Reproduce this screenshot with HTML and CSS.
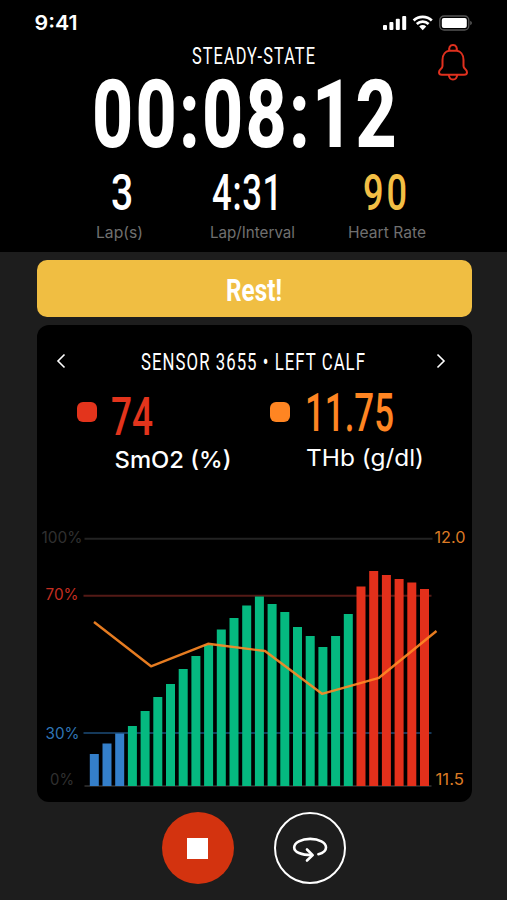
FILE: index.html
```
<!DOCTYPE html>
<html lang="en">

<head>
    <meta charset="utf-8">
    <title>Steady-State</title>
    <link rel="stylesheet" href="styles.css">
</head>
<body onload="renderBars()">
    <div class="header">
        <div class="status-bar">
            <svg class="clock" width="60" height="24">
                <text x="-.5" y="18.500" textLength="43" lengthAdjust="spacingAndGlyphs">9:41</text>
            </svg>
            <svg class="status-icons" width="90" height="20" fill="#fff">
                <rect x="0" y="11" width="4" height="5" rx="1"/>
                <rect x="6.400" y="8" width="4" height="8" rx="1"/>
                <rect x="12.800" y="4.800" width="4" height="11.200" rx="1"/>
                <rect x="19.200" y="2" width="4" height="14" rx="1"/>
                <g fill="none" stroke="#fff" stroke-width="2.700">
                    <path d="M30.600 6.500a13.200 13.200 0 0 1 18.200 0"/>
                    <path d="M33.800 10a8.600 8.600 0 0 1 11.800 0"/>
                </g>
                <path d="M36.200 12.500a5 5 0 0 1 7 0L39.700 16.200z"/>
                <rect x="56.800" y="2" width="29" height="14" rx="4.300" fill="none" stroke="#555" stroke-width="1.300"/>
                <rect x="58.800" y="4" width="25" height="10" rx="2"/>
                <path d="M87.300 6.800c2 .8 2 3.600 0 4.400z" fill="#666"/>
            </svg>
        </div>
        <div class="title-row">
            <svg class="narrow" width="130" height="30">
                <text class="mode" x="0" y="21.700" textLength="124" lengthAdjust="spacingAndGlyphs">STEADY-STATE</text>
            </svg>
            <svg class="bell" width="34" height="40" viewBox="0 0 34 40">
                <path d="M6.500 18C6.500 12 10 9.300 13 8.800H21c3 .5 6.500 3.200 6.500 9.200V24c0 3 3.500 3 3.500 6.200 0 1.800-1.500 2.600-3 2.600H6c-1.800 0-3-.8-3-2.600 0-3.200 3.500-3.200 3.500-6.200z"/>
                <path d="M13.500 8.800c-1-3 .5-5.900 3.500-5.900s4.500 2.900 3.500 5.900"/>
                <path d="M12.800 33c.3 2.800 1.800 4.500 4.200 4.500s3.900-1.700 4.200-4.500"/>
            </svg>
        </div>
        <svg class="narrow timer" width="310" height="80">
            <text x="0" y="73" textLength="307" lengthAdjust="spacingAndGlyphs">00:08:12</text>
        </svg>
        <div class="stats">
            <svg class="narrow" width="100" height="80">
                <text class="value" x="14" y="43" textLength="23" lengthAdjust="spacingAndGlyphs">3</text>
                <text class="label" x="-1" y="71" textLength="47" lengthAdjust="spacingAndGlyphs">Lap(s)</text>
            </svg>
            <svg class="narrow" width="100" height="80">
                <text class="value" x="1" y="43" textLength="71" lengthAdjust="spacingAndGlyphs">4:31</text>
                <text class="label" x="-1" y="71" textLength="85" lengthAdjust="spacingAndGlyphs">Lap/Interval</text>
            </svg>
            <svg class="narrow" width="100" height="80">
                <text class="value heart" x="14" y="43" textLength="47" lengthAdjust="spacingAndGlyphs">90</text>
                <text class="label" x="-1" y="71" textLength="78" lengthAdjust="spacingAndGlyphs">Heart Rate</text>
            </svg>
        </div>
    </div>

    <div class="rest">
        <svg class="narrow" width="56" height="40">
            <text class="rest-text" x="0" y="32" textLength="56" lengthAdjust="spacingAndGlyphs">Rest!</text>
        </svg>
    </div>

    <div class="card">
        <div class="sensor-row">
            <svg class="arrow" width="10" height="16"><path d="M8.500 1.500L2 8l6.500 6.500"/></svg>
            <svg class="narrow" width="224" height="30">
                <text class="sensor" x="2" y="24" textLength="225" lengthAdjust="spacingAndGlyphs">SENSOR 3655 • LEFT CALF</text>
            </svg>
            <svg class="arrow" width="10" height="16"><path d="M1.500 1.500L8 8l-6.500 6.500"/></svg>
        </div>
        <div class="readings">
            <div class="reading">
                <span class="dot red"></span>
                <svg class="narrow" width="130" height="90">
                    <text class="reading-value smo" x="14" y="47.500" textLength="42" lengthAdjust="spacingAndGlyphs">74</text>
                    <text class="unit" x="17.500" y="80.500" textLength="117" lengthAdjust="spacingAndGlyphs">SmO2 (%)</text>
                </svg>
            </div>
            <div class="reading">
                <span class="dot orange"></span>
                <svg class="narrow" width="140" height="90">
                    <text class="reading-value thb" x="15" y="44" textLength="89" lengthAdjust="spacingAndGlyphs">11.75</text>
                    <text class="unit light" x="16" y="79" textLength="118" lengthAdjust="spacingAndGlyphs">THb (g/dl)</text>
                </svg>
            </div>
        </div>
        <svg class="chart" width="435" height="287" viewBox="36.5 515 435 287">
            <path d="M84 538.700H432" stroke="#232323" stroke-width="2"/>
            <path d="M83 595.800H431" stroke="#541a16" stroke-width="2"/>
            <path d="M83 732.900H431" stroke="#15395a" stroke-width="2"/>
            <path d="M84 786H431" stroke="#333" stroke-width="1.500"/>
            <g id="bars"></g>
            <path d="M93.500 622L150.500 666.300L207.500 643.800L264.500 651L321.500 693.800L378.500 677.800L436 631" fill="none" stroke="#ff8a25" stroke-opacity=".9" stroke-width="2.400" stroke-linejoin="round"/>
            <text class="axis dim" x="41" y="543.300" textLength="41" lengthAdjust="spacingAndGlyphs">100%</text>
            <text class="axis high" x="45" y="600.300" textLength="33" lengthAdjust="spacingAndGlyphs">70%</text>
            <text class="axis low" x="45" y="738.700" textLength="34" lengthAdjust="spacingAndGlyphs">30%</text>
            <text class="axis dim" x="49.500" y="785.300" textLength="24" lengthAdjust="spacingAndGlyphs">0%</text>
            <text class="axis scale" x="434" y="543.300" textLength="31" lengthAdjust="spacingAndGlyphs">12.0</text>
            <text class="axis scale" x="435" y="785.300" textLength="28.500" lengthAdjust="spacingAndGlyphs">11.5</text>
        </svg>
    </div>

    <div class="controls">
        <div class="stop"><span></span></div>
        <div class="rotate">
            <svg width="40" height="30" viewBox="290.300 833 40 30">
                <path d="M318.700 854.200c5-1.200 7.600-3.600 7.600-6.700 0-5-7-8.600-15.800-8.600s-16 3.600-16 8.600c0 4.600 7 7.600 17.500 7.600"/>
                <path d="M307.300 849.500l5.700 5.600-5.700 5.400"/>
            </svg>
        </div>
    </div>

    <script>
        // top edge of each bar on the chart
        var tops = [
            754, 743.5, 733.5, 726, 711, 697, 684, 669, 656,
            645, 629.5, 618, 605.5, 596.5, 604, 612, 627, 636,
            647, 636, 614, 586.5, 571, 575, 579, 582.5, 589
        ];
        function renderBars() {
            var cells = "";
            for (var i = 0; i < tops.length; i++) {
                var zone = "mid";
                if (i < 3) zone = "cold";
                if (i > 20) zone = "hot";
                cells += "<rect class='" + zone + "' x='" + (89.3 + i * 12.7) + "' y='" + tops[i] + "' width='9' height='" + (786 - tops[i]) + "'/>";
            }
            document.getElementById("bars").innerHTML = cells;
        }
    </script>
</body>

</html>
```
FILE: styles.css
```
* {
    margin: 0;
    box-sizing: border-box;
}

body {
    width: 507px;
    height: 900px;
    overflow: hidden;
    background-color: #1d1d1d;
    font-family: Inter, sans-serif;
}

svg {
    display: block;
    overflow: visible;
}

.header {
    height: 252px;
    background-color: #000;
}

.status-bar {
    display: flex;
    justify-content: space-between;
    height: 42px;
    padding: 11px 34px 0 35px;
}

.status-icons {
    margin-top: 3px;
}

.clock text {
    font-size: 20px;
    font-weight: 600;
    fill: #fff;
}

.title-row {
    display: flex;
    justify-content: space-between;
    height: 36px;
    padding: 0 37px 0 192px;
}

.narrow text {
    font-family: Roboto, sans-serif;
    fill: #fff;
}

.narrow .mode {
    font-size: 23px;
    letter-spacing: 1.5px;
}

.bell {
    fill: none;
    stroke: #e0301e;
    stroke-width: 2;
}

.timer {
    margin-left: 91.5px;
    margin-top: -4px;
}

.timer text {
    font-size: 95px;
    font-weight: 800;
    letter-spacing: 3px;
}

.stats {
    display: grid;
    grid-template-columns: 113.5px 138px 100px;
    margin-top: 13px;
    padding-left: 97px;
}

.narrow .value {
    font-size: 50px;
    font-weight: 500;
    letter-spacing: 1px;
}

.narrow .heart {
    fill: #f3bf45;
    letter-spacing: 4px;
}

.narrow .label {
    font-family: Inter, sans-serif;
    font-size: 15.5px;
    fill: #707070;
}

.rest {
    display: flex;
    justify-content: center;
    align-items: center;
    width: 435px;
    height: 57px;
    margin: 8px 0 8px 36.5px;
    border-radius: 10px;
    background-color: #f0be42;
}

.narrow .rest-text {
    font-size: 32px;
    font-weight: 700;
}

.card {
    display: flex;
    flex-direction: column;
    width: 435px;
    height: 477px;
    margin-left: 36.5px;
    border-radius: 12px;
    background-color: #000;
}

.sensor-row {
    display: flex;
    justify-content: space-between;
    align-items: center;
    height: 62px;
    padding: 9px 26px 0 19px;
}

.arrow {
    fill: none;
    stroke: #fff;
    stroke-width: 1.6;
}

.narrow .sensor {
    font-size: 24px;
    letter-spacing: 1.5px;
}

.readings {
    display: flex;
    height: 128px;
    padding-left: 40.5px;
}

.reading {
    display: flex;
    width: 193px;
}

.dot {
    width: 20px;
    height: 20px;
    margin-top: 14.5px;
    border-radius: 6px;
}

.red {
    background-color: #e3341c;
}

.orange {
    background-color: #ff8522;
}

.narrow .reading-value {
    font-size: 54px;
    font-weight: 500;
}

.narrow .smo {
    fill: #e3341c;
}

.narrow .thb {
    fill: #ff8522;
}

.narrow .unit {
    font-family: Inter, sans-serif;
    font-size: 23px;
    font-weight: 450;
}

.narrow .light {
    font-weight: 400;
}

.axis {
    font-size: 15.5px;
}

.dim {
    fill: #303030;
}

.high {
    fill: #c52e20;
}

.low {
    fill: #2f75b5;
}

.scale {
    fill: #dd7b25;
}

.cold {
    fill: #347fca;
}

.mid {
    fill: #05b980;
}

.hot {
    fill: #e3301b;
}

.controls {
    display: flex;
    gap: 40.5px;
    padding: 10px 0 0 161.7px;
}

.stop,
.rotate {
    display: flex;
    justify-content: center;
    align-items: center;
    width: 72px;
    height: 72px;
    border-radius: 50%;
}

.stop {
    background-color: #d3330f;
}

.stop span {
    width: 21px;
    height: 21px;
    background-color: #fff;
}

.rotate {
    border: 2.5px solid #fff;
}

.rotate svg {
    fill: none;
    stroke: #fff;
    stroke-width: 2.6;
    stroke-linecap: round;
    stroke-linejoin: round;
}
```
